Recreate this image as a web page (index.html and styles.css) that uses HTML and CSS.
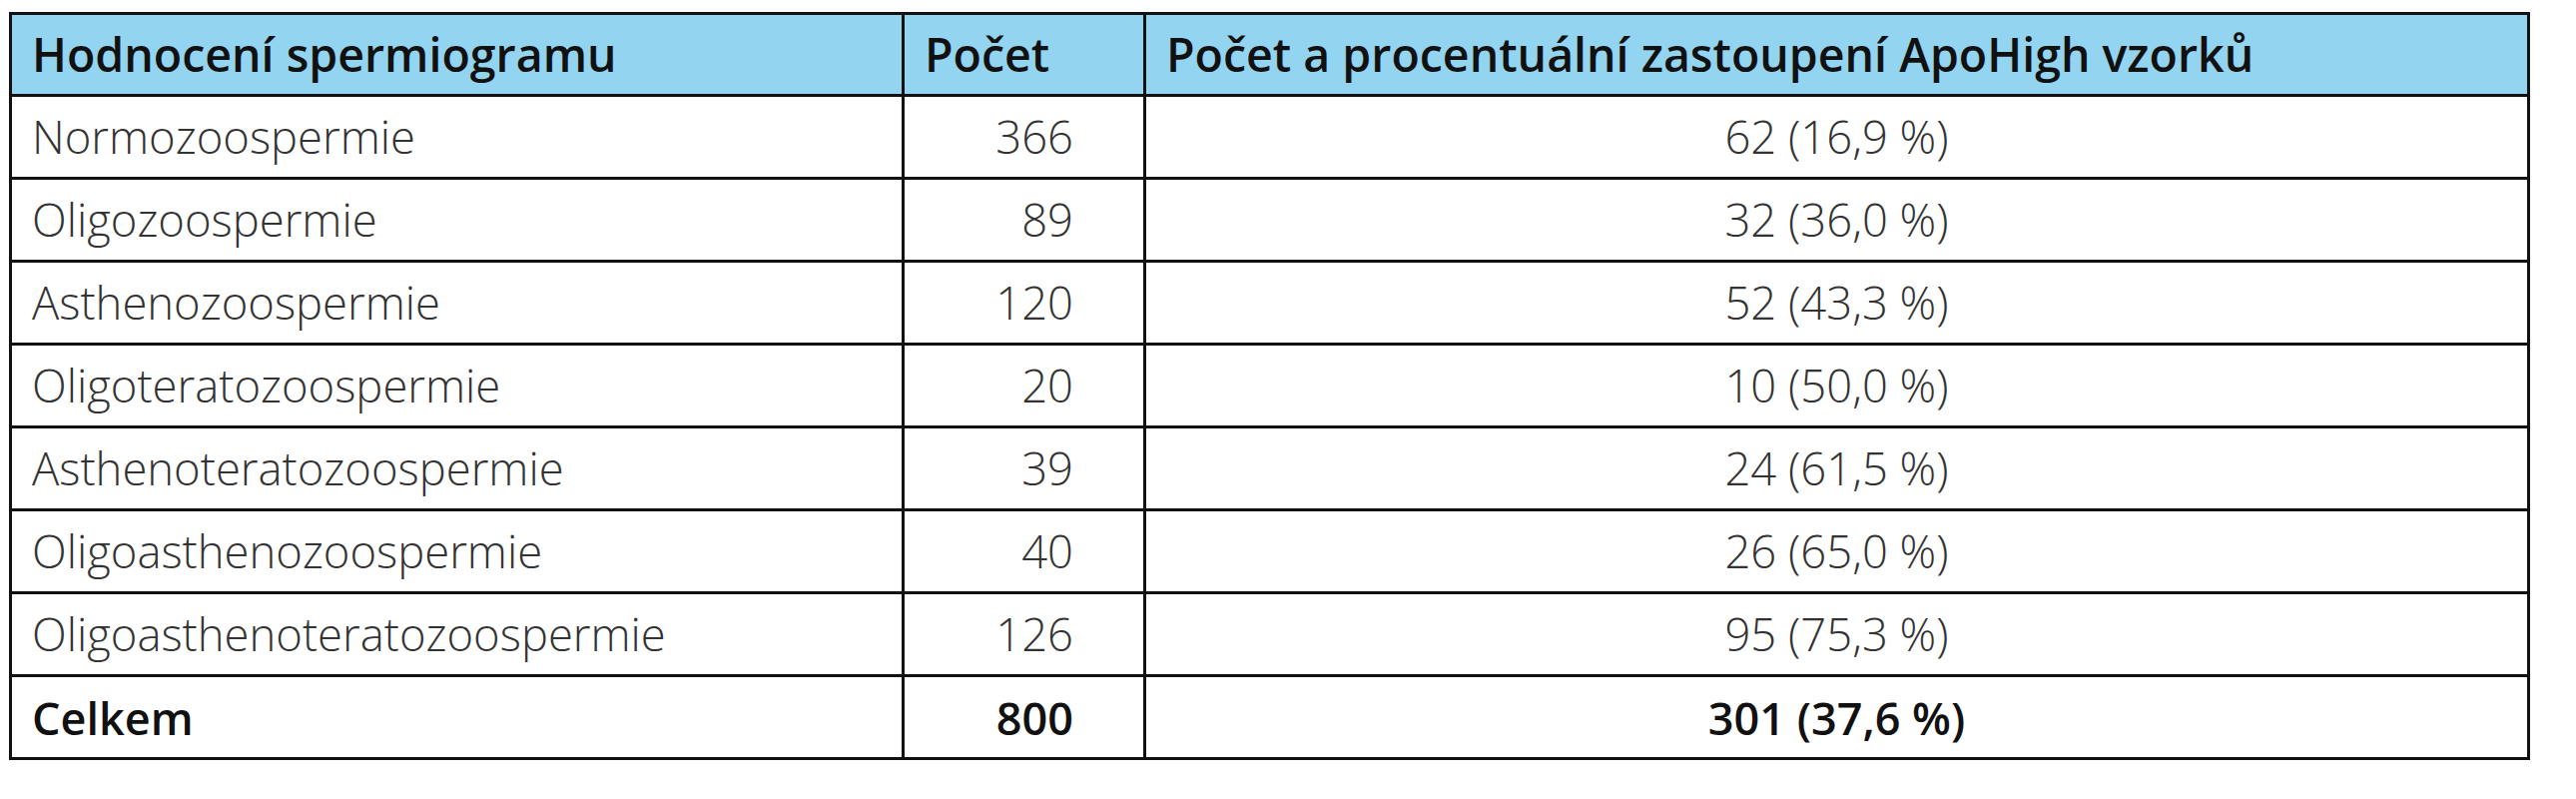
FILE: index.html
```html
<!DOCTYPE html>
<html lang="cs">
<head>
<meta charset="utf-8">
<title>Hodnocení spermiogramu</title>
<link rel="stylesheet" href="styles.css">
</head>
<body>
<table class="data">
  <thead>
    <tr class="head">
      <th class="c1">Hodnocení spermiogramu</th>
      <th class="c2">Počet</th>
      <th class="c3">Počet a procentuální zastoupení ApoHigh vzorků</th>
    </tr>
  </thead>
  <tbody>
    <tr><td class="c1">Normozoospermie</td><td class="c2 num">366</td><td class="c3 mid">62 (16,9 %)</td></tr>
    <tr><td class="c1">Oligozoospermie</td><td class="c2 num">89</td><td class="c3 mid">32 (36,0 %)</td></tr>
    <tr><td class="c1">Asthenozoospermie</td><td class="c2 num">120</td><td class="c3 mid">52 (43,3 %)</td></tr>
    <tr><td class="c1">Oligoteratozoospermie</td><td class="c2 num">20</td><td class="c3 mid">10 (50,0 %)</td></tr>
    <tr><td class="c1">Asthenoteratozoospermie</td><td class="c2 num">39</td><td class="c3 mid">24 (61,5 %)</td></tr>
    <tr><td class="c1">Oligoasthenozoospermie</td><td class="c2 num">40</td><td class="c3 mid">26 (65,0 %)</td></tr>
    <tr><td class="c1">Oligoasthenoteratozoospermie</td><td class="c2 num">126</td><td class="c3 mid">95 (75,3 %)</td></tr>
    <tr class="total"><td class="c1">Celkem</td><td class="c2 num">800</td><td class="c3 mid">301 (37,6 %)</td></tr>
  </tbody>
</table>
</body>
</html>
```

FILE: styles.css
```css
html, body {
  margin: 0;
  padding: 0;
  background: #ffffff;
}

body {
  padding: 12px 0 0 9px;
  font-family: "Open Sans", "Liberation Sans", sans-serif;
}

.data {
  box-sizing: border-box;
  width: 2525px;
  table-layout: fixed;
  border-collapse: separate;
  border-spacing: 0;
  border-top: 3px solid #111111;
  border-left: 3px solid #111111;
}

.data th,
.data td {
  box-sizing: border-box;
  height: 83px;
  padding: 0 20px;
  border-right: 3px solid #111111;
  border-bottom: 3px solid #111111;
  font-size: 45.4px;
  line-height: 1;
  text-align: left;
  vertical-align: middle;
  white-space: nowrap;
}

.data th {
  height: 82px;
  background: #93d4f0;
  color: #111111;
  font-size: 46.5px;
  font-weight: 600;
}

.data td {
  color: #333333;
  font-weight: 350;
}

.data .c1 { width: 894px; }
.data .c2 { width: 242px; }
.data .c3 { width: 1386px; }

.data td.num {
  text-align: right;
  padding-right: 70px;
}

.data td.mid {
  text-align: center;
}

.data .total td {
  color: #111111;
  font-size: 45px;
  font-weight: 600;
}
```
